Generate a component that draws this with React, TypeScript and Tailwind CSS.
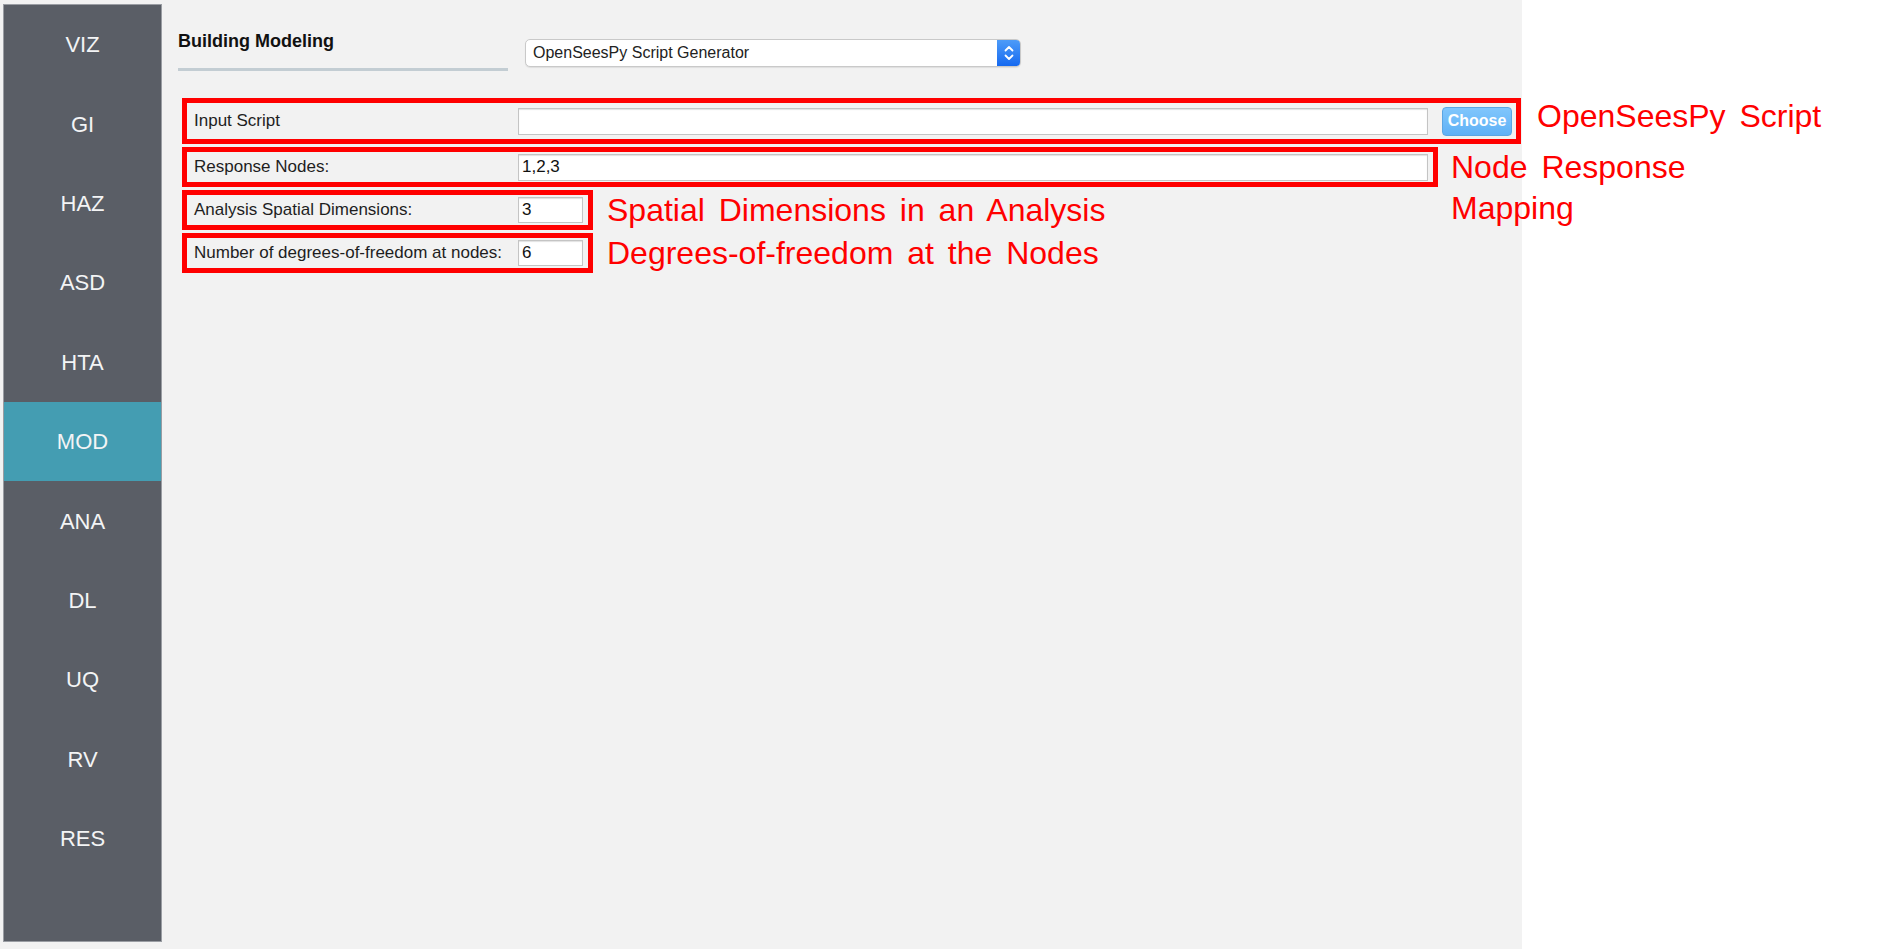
const NAV = ["VIZ", "GI", "HAZ", "ASD", "HTA", "MOD", "ANA", "DL", "UQ", "RV", "RES"];

function Sidebar() {
  return (
    <nav className="w-[159px] h-[938px] shrink-0 flex flex-col bg-[#5a5e66] border border-[#9a9da3]">
      {NAV.map((n) => (
        <div
          key={n}
          className={
            "h-[79.4px] shrink-0 flex items-center justify-center text-[22px] text-[#f3f4f5] " +
            (n === "MOD" ? "bg-[#449db2]" : "")
          }
        >
          {n}
        </div>
      ))}
    </nav>
  );
}

function TextBox({ value = "", className = "" }: { value?: string; className?: string }) {
  return (
    <div
      className={
        "flex items-center bg-white border border-[#c4c4c4] shadow-[inset_0_1px_1px_rgba(0,0,0,0.12)] pl-[3px] text-[17px] text-[#111] " +
        className
      }
    >
      {value}
    </div>
  );
}

function Label({ children }: { children: React.ReactNode }) {
  return <div className="w-[324px] shrink-0 text-[17px] text-[#1e1e1e] whitespace-nowrap">{children}</div>;
}

function Note({ children, className = "" }: { children: React.ReactNode; className?: string }) {
  return (
    <div className={"text-[32px] text-[#ff0000] whitespace-pre [word-spacing:5px] " + className}>{children}</div>
  );
}

function Dropdown() {
  return (
    <div className="mt-[11px] flex w-[496px] h-[28px] bg-white border border-[#c9c9c9] rounded-[5px] shadow-[0_1px_1px_rgba(0,0,0,0.08)] overflow-hidden">
      <div className="flex-1 flex items-center pl-[7px] text-[16px] text-[#222]">OpenSeesPy Script Generator</div>
      <div className="w-[23px] flex items-center justify-center bg-gradient-to-b from-[#4d9bf8] to-[#1569f0]">
        <svg width="12" height="18" viewBox="0 0 12 18" fill="none" stroke="white" strokeWidth="1.8" strokeLinecap="round" strokeLinejoin="round">
          <path d="M2.5 6.5 L6 3 L9.5 6.5" />
          <path d="M2.5 11.5 L6 15 L9.5 11.5" />
        </svg>
      </div>
    </div>
  );
}

export default function App() {
  return (
    <div className="w-[1881px] h-[949px] flex bg-white font-['Liberation_Sans',Arial,sans-serif] overflow-hidden">
      <div className="w-[1522px] h-full shrink-0 flex bg-[#f2f2f2] pt-[4px] pl-[3px]">
        <Sidebar />

        <main className="ml-[16px] flex flex-col">
          {/* header */}
          <div className="flex items-start pt-[24px]">
            <div className="w-[330px]">
              <div className="h-[26px] leading-[26px] text-[18px] font-bold text-[#111]">Building Modeling</div>
              <div className="mt-[14px] h-[3px] bg-[#c3cdd3]" />
            </div>
            <div className="ml-[17px]">
              <Dropdown />
            </div>
          </div>

          {/* fields */}
          <div className="mt-[27px] ml-[4px] flex flex-col gap-[3px]">
            <div className="flex items-center h-[46px]">
              <div className="w-[1339px] h-[46px] shrink-0 flex items-center border-[5px] border-[#ff0000] pl-[7px]">
                <Label>Input Script</Label>
                <TextBox className="w-[910px] h-[27px]" />
                <button className="ml-[14px] w-[70px] h-[29px] rounded-[4px] border border-[#5ba6e3] bg-gradient-to-b from-[#80c6fc] to-[#5fb1f6] text-white text-[16px] font-bold">
                  Choose
                </button>
              </div>
              <Note className="ml-[16px] mb-[10px]">OpenSeesPy Script</Note>
            </div>

            <div className="flex items-start h-[40px]">
              <div className="w-[1256px] h-[40px] shrink-0 flex items-center border-[5px] border-[#ff0000] pl-[7px]">
                <Label>Response Nodes:</Label>
                <TextBox value="1,2,3" className="w-[910px] h-[27px]" />
              </div>
              <Note className="ml-[13px] leading-[41px]">
                {"Node Response\nMapping"}
              </Note>
            </div>

            <div className="flex items-center h-[40px]">
              <div className="w-[411px] h-[40px] shrink-0 flex items-center border-[5px] border-[#ff0000] pl-[7px]">
                <Label>Analysis Spatial Dimensions:</Label>
                <TextBox value="3" className="w-[65px] h-[26px]" />
              </div>
              <Note className="ml-[14px]">Spatial Dimensions in an Analysis</Note>
            </div>

            <div className="flex items-center h-[40px]">
              <div className="w-[411px] h-[40px] shrink-0 flex items-center border-[5px] border-[#ff0000] pl-[7px]">
                <Label>Number of degrees-of-freedom at nodes:</Label>
                <TextBox value="6" className="w-[65px] h-[26px]" />
              </div>
              <Note className="ml-[14px]">Degrees-of-freedom at the Nodes</Note>
            </div>
          </div>
        </main>
      </div>
    </div>
  );
}
